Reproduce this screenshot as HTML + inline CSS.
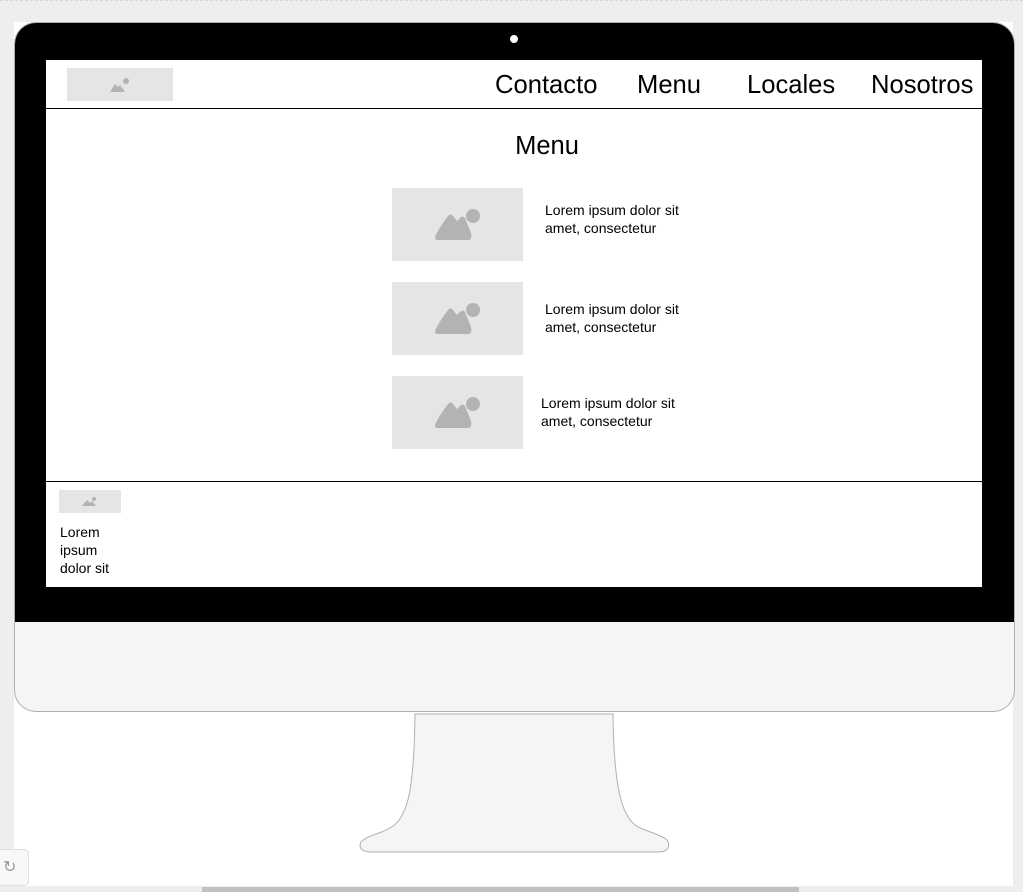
<!DOCTYPE html>
<html><head><style>
*{margin:0;padding:0;box-sizing:border-box}
body{width:1023px;height:892px;background:#eeeeee;position:relative;overflow:hidden;font-family:"Liberation Sans",Arial,sans-serif;color:#000}
.a{position:absolute}
.ph{position:absolute;background:#e5e5e5}
.ph svg{position:absolute;left:0;top:0;width:100%;height:100%}
.t{position:absolute;font-size:14px;line-height:18px}
.nav{position:absolute;font-size:25.6px;top:70px;line-height:30px}
</style></head><body>
<div class="a" style="left:14px;top:22px;width:999px;height:864px;background:#fff"></div>
<div class="a" style="left:0;top:0;width:1023px;height:1px;border-top:1px dashed #d8d8d8"></div>
<div class="a" style="left:14px;top:22px;width:1001px;height:690px;background:#f5f5f5;border:1px solid #b0b0b0;border-radius:22px;overflow:hidden">
  <div class="a" style="left:-1px;top:-1px;width:1001px;height:600px;background:#000"></div>
</div>
<div class="a" style="left:510px;top:35px;width:8px;height:8px;border-radius:50%;background:#fff"></div>
<svg class="a" style="left:0;top:0" width="1023" height="892">
<path d="M415,714 L613,714 C614,790 622,820 640,828 C660,836 672,838 668,848 C666,852 660,852 655,852 L372,852 C362,852 358,848 361,842 C366,836 380,834 390,828 C408,818 414,790 415,714 Z" fill="#f5f5f5" stroke="#b0b0b0" stroke-width="1"/>
</svg>
<div class="a" style="left:46px;top:60px;width:936px;height:527px;background:#fff"></div>
<div class="a" style="left:46px;top:108px;width:936px;height:1px;background:#000"></div>
<div class="a" style="left:46px;top:481px;width:936px;height:1px;background:#000"></div>

<div class="ph" style="left:67px;top:68px;width:106px;height:33px"><svg viewBox="0 0 106 33"><path d="M43,24 L48,16 L51,19 L53,17 L58,24 Z" fill="#b3b3b3"/><circle cx="59" cy="13" r="3" fill="#b3b3b3"/></svg></div>
<div class="nav" style="left:495px">Contacto</div>
<div class="nav" style="left:637px">Menu</div>
<div class="nav" style="left:747px">Locales</div>
<div class="nav" style="left:871px">Nosotros</div>

<div class="a" style="left:0;width:1094px;top:131px;text-align:center;font-size:25.5px;line-height:30px">Menu</div>

<div class="ph" style="left:392px;top:188px;width:131px;height:73px"><svg viewBox="0 0 131 73"><path d="M43,50 C43,46 53,32 56,28 C58,26 60,26 61,28 L65,33 L68,30 C70,28 71,28 73,30 L79,45 C80,49 79,52 76,52 L46,52 C44,52 43,51 43,50 Z" fill="#b3b3b3"/><circle cx="81" cy="28" r="7" fill="#b3b3b3"/></svg></div>
<div class="t" style="left:545px;top:201px">Lorem ipsum dolor sit<br>amet, consectetur</div>

<div class="ph" style="left:392px;top:282px;width:131px;height:73px"><svg viewBox="0 0 131 73"><path d="M43,50 C43,46 53,32 56,28 C58,26 60,26 61,28 L65,33 L68,30 C70,28 71,28 73,30 L79,45 C80,49 79,52 76,52 L46,52 C44,52 43,51 43,50 Z" fill="#b3b3b3"/><circle cx="81" cy="28" r="7" fill="#b3b3b3"/></svg></div>
<div class="t" style="left:545px;top:300px">Lorem ipsum dolor sit<br>amet, consectetur</div>

<div class="ph" style="left:392px;top:376px;width:131px;height:73px"><svg viewBox="0 0 131 73"><path d="M43,50 C43,46 53,32 56,28 C58,26 60,26 61,28 L65,33 L68,30 C70,28 71,28 73,30 L79,45 C80,49 79,52 76,52 L46,52 C44,52 43,51 43,50 Z" fill="#b3b3b3"/><circle cx="81" cy="28" r="7" fill="#b3b3b3"/></svg></div>
<div class="t" style="left:541px;top:394px">Lorem ipsum dolor sit<br>amet, consectetur</div>

<div class="ph" style="left:59px;top:490px;width:62px;height:23px"><svg viewBox="0 0 62 23"><path d="M23,16 L28,10 L31,13 L33,11 L37,16 Z" fill="#b3b3b3"/><circle cx="35" cy="9" r="2" fill="#b3b3b3"/></svg></div>
<div class="t" style="left:60px;top:523px">Lorem<br>ipsum<br>dolor sit</div>

<div class="a" style="left:-6px;top:849px;width:35px;height:37px;background:#f8f8f8;border:1px solid #e0e0e0;border-radius:5px"></div>
<div class="a" style="left:3px;top:857px;font-size:16px;color:#999">&#8635;</div>
<div class="a" style="left:0;top:886px;width:1023px;height:6px;background:#eeeeee"></div>
<div class="a" style="left:202px;top:887px;width:597px;height:5px;background:#c1c1c1"></div>
</body></html>
